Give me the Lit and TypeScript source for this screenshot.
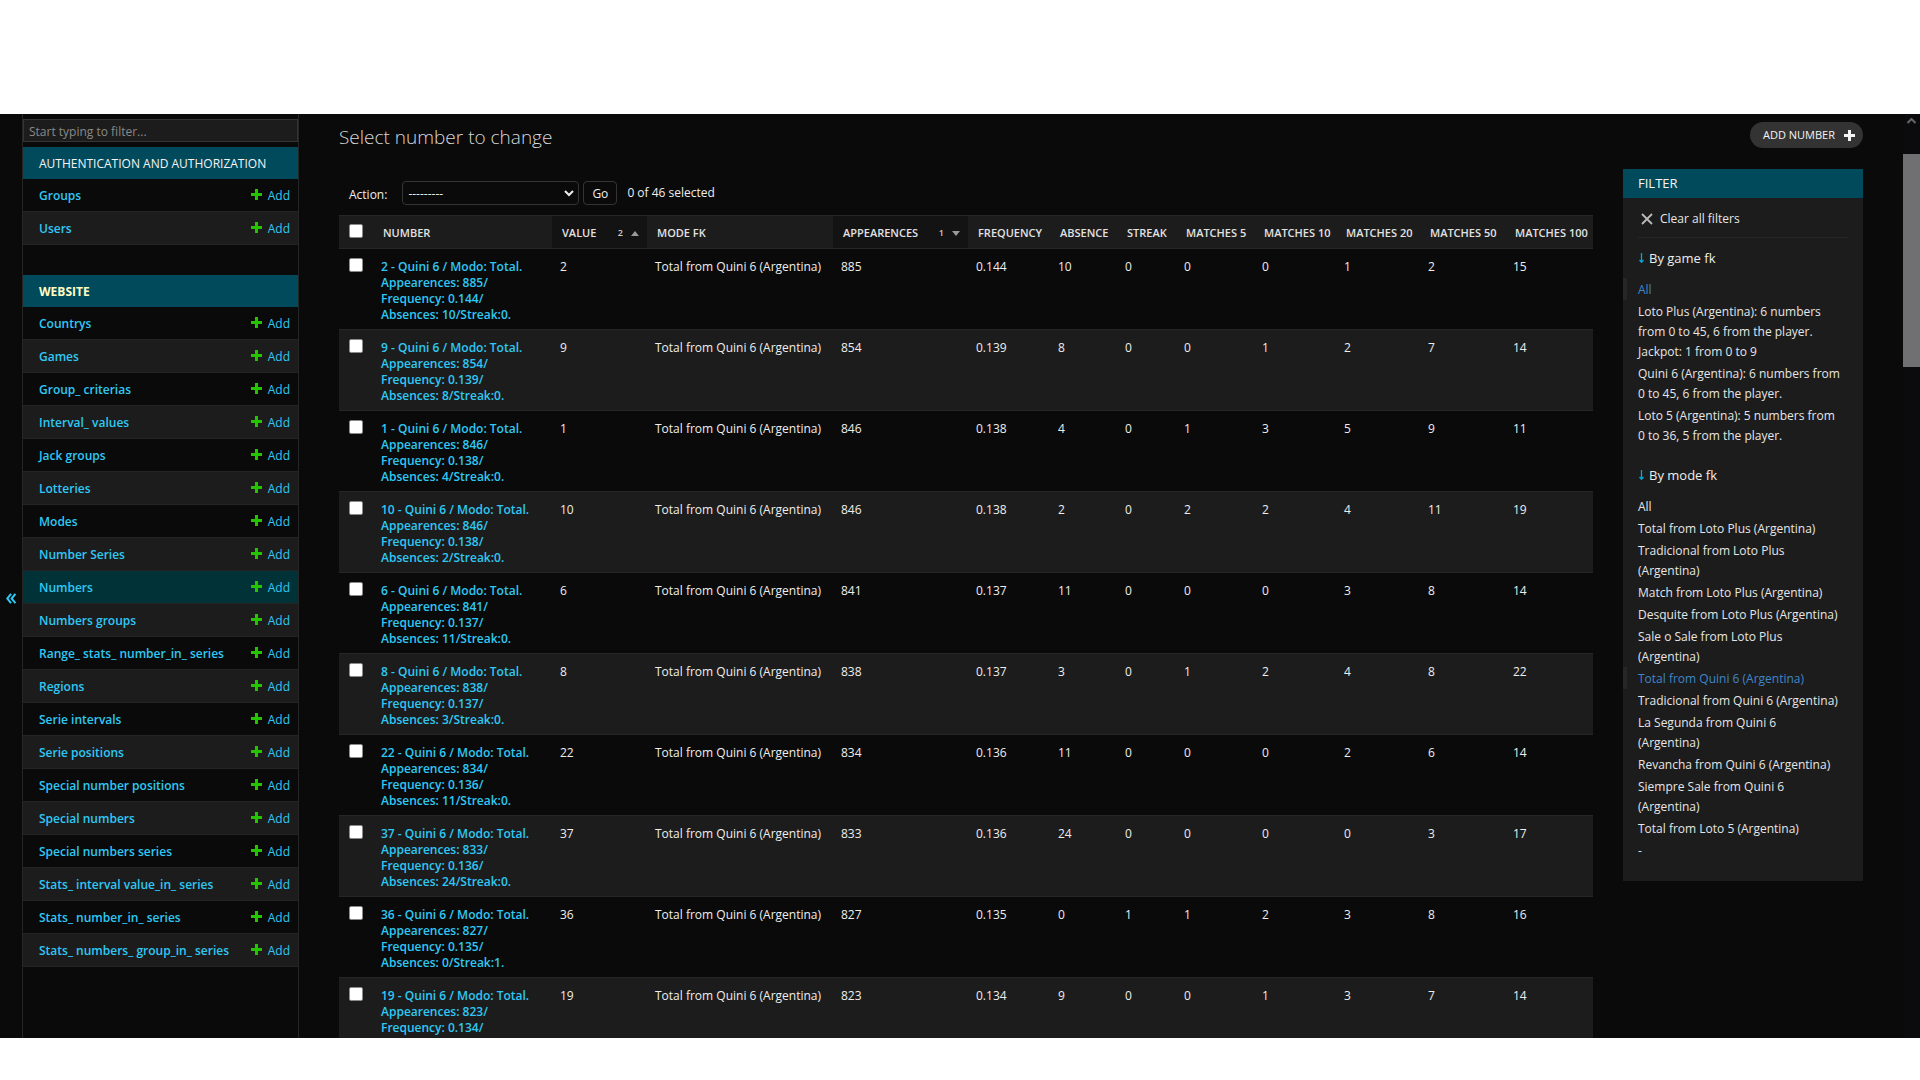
import { LitElement, html, css, svg } from "lit";
import { customElement } from "lit/decorators.js";
import { classMap } from "lit/directives/class-map.js";

const plusIcon = html`<svg class="plus" viewBox="0 0 11 11" aria-hidden="true">
  ${svg`<path d="M4 0h3v4h4v3H7v4H4V7H0V4h4z" fill="currentColor"></path>`}
</svg>`;

const authModels = ["Groups", "Users"];
const websiteModels = [
  "Countrys", "Games", "Group_ criterias", "Interval_ values", "Jack groups",
  "Lotteries", "Modes", "Number Series", "Numbers", "Numbers groups",
  "Range_ stats_ number_in_ series", "Regions", "Serie intervals",
  "Serie positions", "Special number positions", "Special numbers",
  "Special numbers series", "Stats_ interval value_in_ series",
  "Stats_ number_in_ series", "Stats_ numbers_ group_in_ series",
];

@customElement("admin-sidebar")
class AdminSidebar extends LitElement {
  static styles = css`
    :host { display: flex; flex: none; }
    .toggle {
      width: 22px; flex: none; padding: 44px 0 0; border: 0; background: none;
      color: #2fc8f4; display: flex; align-items: center; justify-content: center;
    }
    .toggle svg { width: 10px; height: 11px; }
    nav {
      width: 275px; padding-top: 5px;
      border-left: 1px solid #262626; border-right: 1px solid #262626;
    }
    .filter {
      display: block; box-sizing: border-box; width: 100%; height: 23px; margin: 0 0 5px;
      padding: 2px 5px 0; border: 1px solid #343434; background: #1c1c1c; color: #eee;
      font: 12px/16px "Open Sans", "Noto Sans", sans-serif;
    }
    .filter::placeholder { color: #8a8a8a; opacity: 1; }
    table { width: 100%; border-collapse: separate; border-spacing: 0; margin-bottom: 30px; }
    caption {
      box-sizing: border-box; height: 32px; padding: 9px 16px 7px; background: #004a5c;
      color: #f4f4f4; text-align: left; line-height: 16px; text-transform: uppercase;
    }
    caption.current { color: #ffffc4; font-weight: 700; }
    th, td { padding: 9px 8px 7px; height: 16px; line-height: 16px; border-bottom: 1px solid #232323; }
    th { padding-left: 16px; text-align: left; font-weight: 600; }
    tr:nth-child(even) { background: #1c1c1c; }
    tr.current { background: #003238; }
    a { color: #2fc8f4; text-decoration: none; }
    .add { display: flex; justify-content: flex-end; gap: 6px; }
    .plus { width: 11px; height: 11px; color: #25c400; margin-top: 1px; }
  `;

  section(name: string, models: string[], current: boolean) {
    return html`<table>
      <caption class=${classMap({ current })}>${name}</caption>
      <tbody>
        ${models.map((m) => html`<tr class=${classMap({ current: m === "Numbers" })}>
          <th scope="row"><a href="#">${m}</a></th>
          <td><a class="add" href="#">${plusIcon}Add</a></td>
        </tr>`)}
      </tbody>
    </table>`;
  }

  render() {
    return html`
      <button class="toggle" aria-label="Toggle navigation">
        <svg viewBox="0 0 10 11" fill="none" stroke="currentColor" stroke-width="2" aria-hidden="true">
          <path d="M5 .8 1.200 5.500 5 10.200M9.400 .8 5.600 5.500 9.400 10.200"></path>
        </svg>
      </button>
      <nav aria-label="Sidebar">
        <input class="filter" type="search" placeholder="Start typing to filter..." aria-label="Filter navigation items" />
        ${this.section("Authentication and Authorization", authModels, false)}
        ${this.section("Website", websiteModels, true)}
      </nav>`;
  }
}

type Row = [number, number, string, number, number, number, number, number, number, number];
const rows: Row[] = [
  [2, 885, "0.144", 10, 0, 0, 0, 1, 2, 15],
  [9, 854, "0.139", 8, 0, 0, 1, 2, 7, 14],
  [1, 846, "0.138", 4, 0, 1, 3, 5, 9, 11],
  [10, 846, "0.138", 2, 0, 2, 2, 4, 11, 19],
  [6, 841, "0.137", 11, 0, 0, 0, 3, 8, 14],
  [8, 838, "0.137", 3, 0, 1, 2, 4, 8, 22],
  [22, 834, "0.136", 11, 0, 0, 0, 2, 6, 14],
  [37, 833, "0.136", 24, 0, 0, 0, 0, 3, 17],
  [36, 827, "0.135", 0, 1, 1, 2, 3, 8, 16],
  [19, 823, "0.134", 9, 0, 0, 1, 3, 7, 14],
];

const columns: { label: string; order?: number; dir?: "up" | "down" }[] = [
  { label: "Number" },
  { label: "Value", order: 2, dir: "up" },
  { label: "Mode fk" },
  { label: "Appearences", order: 1, dir: "down" },
  { label: "Frequency" }, { label: "Absence" }, { label: "Streak" },
  { label: "Matches 5" }, { label: "Matches 10" }, { label: "Matches 20" },
  { label: "Matches 50" }, { label: "Matches 100" },
];

@customElement("result-list")
class ResultList extends LitElement {
  static styles = css`
    :host { display: block; flex: 1; min-width: 0; }
    .actions { display: flex; align-items: center; height: 24px; padding: 12px 10px 10px; }
    .actions label { padding-top: 3px; }
    select, button {
      box-sizing: border-box; height: 24px; margin: 0; border: 1px solid #343434; border-radius: 4px;
      background: #0a0a0a; color: #eee; font: 12px/16px "Open Sans", "Noto Sans", sans-serif;
    }
    .select { display: grid; align-items: center; margin: 0 4px 0 15px; }
    .select select { grid-area: 1 / 1; width: 177px; padding: 2px 5px 0; appearance: none; }
    .select svg { grid-area: 1 / 1; justify-self: end; width: 10px; height: 7px; margin-right: 5px; pointer-events: none; }
    button { width: 34px; padding: 2px 0 0; }
    .counter { margin-left: 10px; }
    table { width: 100%; table-layout: fixed; border-collapse: separate; border-spacing: 0; }
    .c-check { width: 34px; } .c-number { width: 179px; } .c-value { width: 95px; }
    .c-mode { width: 186px; } .c-app { width: 135px; } .c-freq { width: 82px; }
    .c-abs { width: 67px; } .c-streak { width: 59px; } .c-m5 { width: 78px; }
    .c-m10 { width: 82px; } .c-m20 { width: 84px; } .c-m50 { width: 85px; } .c-m100 { width: 88px; }
    th, td { text-align: left; vertical-align: top; border-bottom: 1px solid #262626; line-height: 16px; }
    td { padding: 10px 0 6px 8px; color: #eee; }
    tbody th { padding: 10px 16px 6px 8px; font-weight: 600; }
    thead th {
      padding: 9px 10px 7px; height: 16px; border-top: 1px solid #262626; background: #1c1c1c;
      color: #e2e2e2; font-size: 11px; font-weight: 600; text-transform: uppercase; white-space: nowrap;
    }
    thead th.sorted { background: #131313; }
    .sort { display: flex; justify-content: space-between; align-items: center; }
    .order { display: flex; align-items: center; gap: 8px; font-size: 9px; color: #ccc; margin-right: -2px; }
    .order svg { width: 8px; height: 5px; fill: #999; }
    tbody tr:nth-child(even) { background: #1c1c1c; }
    tbody a { color: #2fc8f4; text-decoration: none; }
    thead a { color: inherit; text-decoration: none; }
    thead th.check { padding: 8px 0 8px 10px; }
    td.check { padding: 9px 0 0 10px; }
    .check input {
      appearance: none; display: block; box-sizing: border-box; width: 14px; height: 14px; margin: 0;
      border: 1px solid #8a8a8a; border-radius: 2px; background: #fff;
    }
  `;

  render() {
    return html`
      <div class="actions">
        <label for="action">Action:</label>
        <span class="select">
          <select id="action"><option>---------</option></select>
          <svg viewBox="0 0 10 7" fill="none" stroke="#eee" stroke-width="2" aria-hidden="true"><path d="M1 1l4 4 4-4"></path></svg>
        </span>
        <button>Go</button>
        <span class="counter">0 of 46 selected</span>
      </div>
      <table>
        <colgroup>
          ${["check", "number", "value", "mode", "app", "freq", "abs", "streak", "m5", "m10", "m20", "m50", "m100"].map(
            (c) => html`<col class="c-${c}" />`
          )}
        </colgroup>
        <thead>
          <tr>
            <th class="check" scope="col"><input type="checkbox" aria-label="Select all" /></th>
            ${columns.map((c) => html`<th scope="col" class=${classMap({ sorted: !!c.order })}>
              <div class="sort"><a href="#">${c.label}</a>
              ${c.order ? html`<span class="order">${c.order}<svg viewBox="0 0 8 5" aria-hidden="true"><path d=${c.dir === "up" ? "M4 0l4 5H0z" : "M0 0h8L4 5z"}></path></svg></span>` : ""}</div>
            </th>`)}
          </tr>
        </thead>
        <tbody>
          ${rows.map(([value, app, freq, absence, streak, ...matches]) => html`<tr>
            <td class="check"><input type="checkbox" aria-label="Select ${value}" /></td>
            <th scope="row"><a href="#">${value} - Quini 6 / Modo: Total.<br />Appearences: ${app}/<br />Frequency: ${freq}/<br />Absences: ${absence}/Streak:${streak}.</a></th>
            <td>${value}</td><td>Total from Quini 6 (Argentina)</td><td>${app}</td><td>${freq}</td>
            <td>${absence}</td><td>${streak}</td>
            ${matches.map((m) => html`<td>${m}</td>`)}
          </tr>`)}
        </tbody>
      </table>`;
  }
}

const gameFilters = [
  "All",
  "Loto Plus (Argentina): 6 numbers from 0 to 45, 6 from the player. Jackpot: 1 from 0 to 9",
  "Quini 6 (Argentina): 6 numbers from\n0 to 45, 6 from the player.",
  "Loto 5 (Argentina): 5 numbers from\n0 to 36, 5 from the player.",
];
const modeFilters = [
  "All", "Total from Loto Plus (Argentina)", "Tradicional from Loto Plus\n(Argentina)",
  "Match from Loto Plus (Argentina)", "Desquite from Loto Plus (Argentina)",
  "Sale o Sale from Loto Plus\n(Argentina)", "Total from Quini 6 (Argentina)",
  "Tradicional from Quini 6 (Argentina)", "La Segunda from Quini 6\n(Argentina)",
  "Revancha from Quini 6 (Argentina)", "Siempre Sale from Quini 6\n(Argentina)",
  "Total from Loto 5 (Argentina)", "-",
];

@customElement("filter-panel")
class FilterPanel extends LitElement {
  static styles = css`
    :host { display: block; flex: none; width: 240px; background: #1c1c1c; padding-bottom: 11px; }
    h2 {
      margin: 0; height: 29px; padding: 0 15px; background: #004a5c; color: #f4f4f4;
      font-size: 13px; font-weight: 400; line-height: 29px; text-transform: uppercase;
    }
    .clear { margin: 0 15px; padding-top: 2px; height: 37px; border-bottom: 1px solid #262626; display: flex; align-items: center; }
    .clear a { display: flex; align-items: center; gap: 7px; padding-left: 3px; }
    .clear svg { width: 12px; height: 12px; }
    a { color: #e6e6e6; text-decoration: none; }
    summary {
      display: flex; align-items: center; gap: 5px; margin: 10px 15px; padding-left: 1px;
      height: 20px; list-style: none; color: #eee; font-size: 13px;
    }
    summary svg { width: 5px; height: 10px; color: #00a8dc; }
    ul { list-style: none; margin: 0; padding: 0 0 9px; }
    li { padding: 2px 15px 0; line-height: 20px; white-space: pre-line; }
    li.selected { padding-left: 11px; border-left: 4px solid #262626; }
    li.selected a { color: #3f86c8; }
  `;

  group(title: string, items: string[], selected: string) {
    return html`<details open>
      <summary><svg viewBox="0 0 5 10" fill="none" stroke="currentColor" aria-hidden="true"><path d="M2.500 0v9M.5 7l2 2.300 2-2.300" stroke-width="1.300"></path></svg>${title}</summary>
      <ul>${items.map((i) => html`<li class=${classMap({ selected: i === selected })}><a href="#">${i}</a></li>`)}</ul>
    </details>`;
  }

  render() {
    return html`
      <h2>Filter</h2>
      <div class="clear"><a href="#"><svg viewBox="0 0 12 12" stroke="#bbb" stroke-width="1.800" aria-hidden="true"><path d="M1 1l10 10M11 1L1 11"></path></svg>Clear all filters</a></div>
      ${this.group("By game fk", gameFilters, "All")}
      ${this.group("By mode fk", modeFilters, "Total from Quini 6 (Argentina)")}`;
  }
}

@customElement("app-root")
class AppRoot extends LitElement {
  static styles = css`
    :host {
      display: flex; flex-direction: column; box-sizing: border-box; height: 100vh;
      padding: 114px 0 42px; background: #fff; color: #eee;
      font: 12px/16px "Open Sans", "Noto Sans", sans-serif;
    }
    .window { flex: 1; min-height: 0; display: flex; overflow: hidden; background: #0a0a0a; }
    main { flex: 1; min-width: 0; overflow: hidden; padding: 8px 40px 0; }
    header { display: flex; justify-content: space-between; align-items: flex-start; height: 47px; }
    h1 { margin: 0; font-size: 19px; line-height: 30px; font-weight: 300; color: #d8d8d8; }
    .add {
      display: flex; align-items: center; gap: 9px; height: 26px; padding: 0 8px 0 13px; border-radius: 13px;
      background: #333; color: #f4f4f4; font-size: 11px; text-decoration: none; text-transform: uppercase;
    }
    .plus { width: 11px; height: 11px; }
    .content { display: flex; align-items: flex-start; gap: 30px; }
    .scroll { flex: none; width: 17px; background: #0b0b0d; display: flex; flex-direction: column; align-items: center; }
    .scroll svg { width: 9px; height: 6px; margin: 4px 0 30px; }
    .thumb { width: 100%; height: 23%; background: #707072; }
  `;

  render() {
    return html`<div class="window">
      <admin-sidebar></admin-sidebar>
      <main>
        <header>
          <h1>Select number to change</h1>
          <a class="add" href="#">Add number ${plusIcon}</a>
        </header>
        <div class="content">
          <result-list></result-list>
          <filter-panel></filter-panel>
        </div>
      </main>
      <div class="scroll" aria-hidden="true">
        <svg viewBox="0 0 9 6" fill="none" stroke="#666" stroke-width="2"><path d="M.5 5l4-4 4 4"></path></svg>
        <div class="thumb"></div>
      </div>
    </div>`;
  }
}
